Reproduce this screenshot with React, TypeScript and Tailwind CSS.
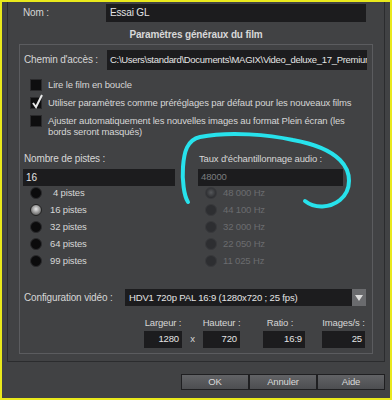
import React from "react";

const pistes = ["4 pistes", "16 pistes", "32 pistes", "64 pistes", "99 pistes"];
const freqs = ["48 000 Hz", "44 100 Hz", "32 000 Hz", "22 050 Hz", "11 025 Hz"];

function Field({ value, className }: { value: string; className: string }) {
  return (
    <div className={`flex items-center overflow-hidden whitespace-nowrap bg-[#1c1c1e] text-[#e4e4e4] ${className}`}>
      {value}
    </div>
  );
}

function CheckBox({ checked }: { checked?: boolean }) {
  return (
    <div className="relative h-[12px] w-[12px] shrink-0 bg-[#0e0e0f] border border-[#2a2a2c]">
      {checked && (
        <svg className="absolute -top-[4px] left-0" width="13" height="16" viewBox="0 0 13 16">
          <path d="M2 9 L5 13 L11 1" fill="none" stroke="#e8e8e8" strokeWidth="2" />
        </svg>
      )}
    </div>
  );
}

function Radio({ state }: { state: "off" | "on" | "disabled" | "disabledOn" }) {
  const cls = {
    off: "bg-[#0b0b0c] border-[#2a2a2c]",
    on: "bg-[radial-gradient(circle_at_50%_40%,#e8e8e8,#8a8a8a_55%,#3a3a3a)] border-[#222]",
    disabled: "bg-[#2d2e31] border-[#38393c]",
    disabledOn: "bg-[radial-gradient(circle_at_50%_45%,#55575a,#2d2e31_70%)] border-[#38393c]",
  }[state];
  return <div className={`h-[12px] w-[12px] shrink-0 rounded-full border ${cls}`} />;
}

export default function App() {
  return (
    <div className="relative flex h-[400px] w-[392px] flex-col whitespace-nowrap border-2 border-[#e9e91c] bg-[#414244] text-[9.5px] leading-none tracking-[-0.15px] text-[#d6d6d6] [font-family:'Liberation_Sans',Arial,sans-serif]">
      {/* outer frame */}
      <div className="mx-[5px] flex h-[360px] flex-col border-x border-b border-[#2b2c2e]">
        <div className="flex items-center pt-[2px]">
          <div className="w-[98px] pl-[15px] text-[10px]">Nom :</div>
          <Field value="Essai GL" className="h-[18px] w-[260px] pl-[4px] text-[10px]" />
        </div>
        <div className="mt-[8px] text-center text-[10px] font-bold text-[#d8d8d8]">
          Paramètres généraux du film
        </div>

        {/* inner group */}
        <div className="mx-[11px] mt-[4px] flex h-[310px] flex-col border border-[#5b5c5f]">
          <div className="mt-[5px] flex items-center">
            <div className="w-[87px] pl-[4px] text-[10px]">Chemin d'accès :</div>
            <Field
              value="C:\Users\standard\Documents\MAGIX\Video_deluxe_17_Premium"
              className="h-[20px] w-[260px] pl-[3px] tracking-[-0.3px]"
            />
          </div>

          <div className="mt-[9px] flex flex-col gap-[6px] pl-[10px]">
            <div className="flex items-center gap-[6px]">
              <CheckBox />
              <span>Lire le film en boucle</span>
            </div>
            <div className="flex items-center gap-[6px]">
              <CheckBox checked />
              <span>Utiliser paramètres comme préréglages par défaut pour les nouveaux films</span>
            </div>
            <div className="flex items-start gap-[6px]">
              <CheckBox />
              <span className="leading-[11px]">
                Ajuster automatiquement les nouvelles images au format Plein écran (les
                <br />
                bords seront masqués)
              </span>
            </div>
          </div>

          <div className="mt-[17px] flex">
            <div className="flex w-[175px] flex-col pl-[3px]">
              <div className="pl-[1px] text-[10px]">Nombre de pistes :</div>
              <Field value="16" className="mt-[5px] h-[17px] w-[152px] pl-[3px] text-[10px]" />
              <div className="mt-[1px] flex flex-col gap-[5px] pl-[7px]">
                {pistes.map((p, i) => (
                  <div key={p} className="flex items-center gap-[8px]">
                    <Radio state={i === 1 ? "on" : "off"} />
                    <span className={i === 0 ? "pl-[3px]" : ""}>{p}</span>
                  </div>
                ))}
              </div>
            </div>
            <div className="flex flex-col pl-[3px]">
              <div className="pl-[1px]">Taux d'échantillonnage audio :</div>
              <Field value="48000" className="mt-[5px] h-[17px] w-[145px] pl-[3px] !text-[#7b7c7f]" />
              <div className="mt-[1px] flex flex-col gap-[5px] pl-[7px] text-[#6b6c6f]">
                {freqs.map((f, i) => (
                  <div key={f} className="flex items-center gap-[6px]">
                    <Radio state={i === 0 ? "disabledOn" : "disabled"} />
                    <span>{f}</span>
                  </div>
                ))}
              </div>
            </div>
          </div>

          <div className="mt-[22px] flex items-center">
            <div className="w-[105px] pl-[4px] text-[10px]">Configuration vidéo :</div>
            <Field value="HDV1 720p PAL 16:9 (1280x720 ; 25 fps)" className="h-[17px] w-[227px] pl-[4px]" />
            <div className="flex h-[17px] w-[14px] items-center justify-center bg-[#6a6b6e]">
              <svg width="8" height="6" viewBox="0 0 8 6">
                <path d="M0 0 H8 L4 6 Z" fill="#dcdcdc" />
              </svg>
            </div>
          </div>

          <div className="mt-[12px] flex items-end pl-[124px]">
            <div className="flex w-[38px] flex-col items-center">
              <span>Largeur :</span>
              <Field value="1280" className="mt-[3px] h-[17px] w-[38px] justify-end pr-[3px]" />
            </div>
            <div className="flex h-[17px] w-[21px] items-center justify-center">x</div>
            <div className="flex w-[37px] flex-col items-center">
              <span>Hauteur :</span>
              <Field value="720" className="mt-[3px] h-[17px] w-[37px] justify-end pr-[3px]" />
            </div>
            <div className="ml-[23px] flex w-[42px] flex-col items-center">
              <span className="pr-[8px]">Ratio :</span>
              <Field value="16:9" className="mt-[3px] h-[17px] w-[42px] justify-end pr-[3px]" />
            </div>
            <div className="ml-[17px] flex w-[43px] flex-col items-center">
              <span>Images/s :</span>
              <Field value="25" className="mt-[3px] h-[17px] w-[43px] justify-end pr-[3px]" />
            </div>
          </div>
        </div>
      </div>

      {/* buttons */}
      <div className="mt-[12px] flex justify-end pr-[5px]">
        {["OK", "Annuler", "Aide"].map((b) => (
          <button
            key={b}
            className="flex h-[16px] w-[68px] items-center justify-center border border-[#1f1f21] bg-[linear-gradient(#626366,#4d4e51)] text-[#d8d8d8]"
          >
            {b}
          </button>
        ))}
      </div>

      {/* cyan annotation */}
      <svg className="pointer-events-none absolute left-[-2px] top-[-2px]" width="392" height="400">
        <path
          d="M188 202 C184 196 182 180 183 167 C184 152 187 140 200 137 C230 131 270 135 293 140 C315 144 330 150 340 160 C352 172 352 190 340 200 C330 208 315 209 305 201"
          fill="none"
          stroke="#27e2ec"
          strokeWidth="4"
          strokeLinecap="round"
        />
      </svg>
    </div>
  );
}
